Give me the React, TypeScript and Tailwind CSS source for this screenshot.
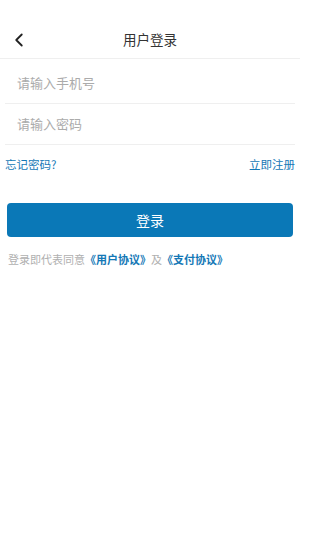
import { ChevronLeft } from "lucide-react";

const font = { fontFamily: '"Noto Sans CJK SC", "Noto Sans", sans-serif' };

export default function App() {
  return (
    <div className="min-h-[533px] w-full max-w-[300px] bg-white" style={font}>
      {/* status bar space */}
      <div className="h-[20px]" />

      {/* header */}
      <div className="relative flex h-[39px] items-center justify-center border-b border-[#efefef]">
        <button className="absolute left-[8px] top-[9px] text-[#222]">
          <ChevronLeft size={22} strokeWidth={2} />
        </button>
        <h1 className="text-[13.5px] text-[#333]">用户登录</h1>
      </div>

      {/* inputs */}
      <div className="mx-[5px] pt-[4px]">
        <div className="flex h-[41px] items-center border-b border-[#efefef] pl-[12px]">
          <input
            className="w-full min-w-0 text-[13px] text-[#333] outline-none placeholder:text-[#ababab]"
            placeholder="请输入手机号"
          />
        </div>
        <div className="flex h-[41px] items-center border-b border-[#efefef] pl-[12px]">
          <input
            type="password"
            className="w-full min-w-0 text-[13px] text-[#333] outline-none placeholder:text-[#ababab]"
            placeholder="请输入密码"
          />
        </div>
      </div>

      {/* links */}
      <div className="flex items-center justify-between px-[5px] pt-[11px] text-[11.5px] text-[#1478b6]">
        <a>忘记密码?</a>
        <a>立即注册</a>
      </div>

      {/* login button */}
      <div className="px-[7px] pt-[30px]">
        <button className="flex h-[34px] w-full items-center justify-center rounded-[4px] bg-[#0a78b7] text-[14px] text-white">
          登录
        </button>
      </div>

      {/* agreement */}
      <p className="px-[8px] pt-[14px] text-[11px] text-[#b0b0b0]">
        登录即代表同意<span className="font-bold text-[#1478b6]">《用户协议》</span>及
        <span className="font-bold text-[#1478b6]">《支付协议》</span>
      </p>
    </div>
  );
}
